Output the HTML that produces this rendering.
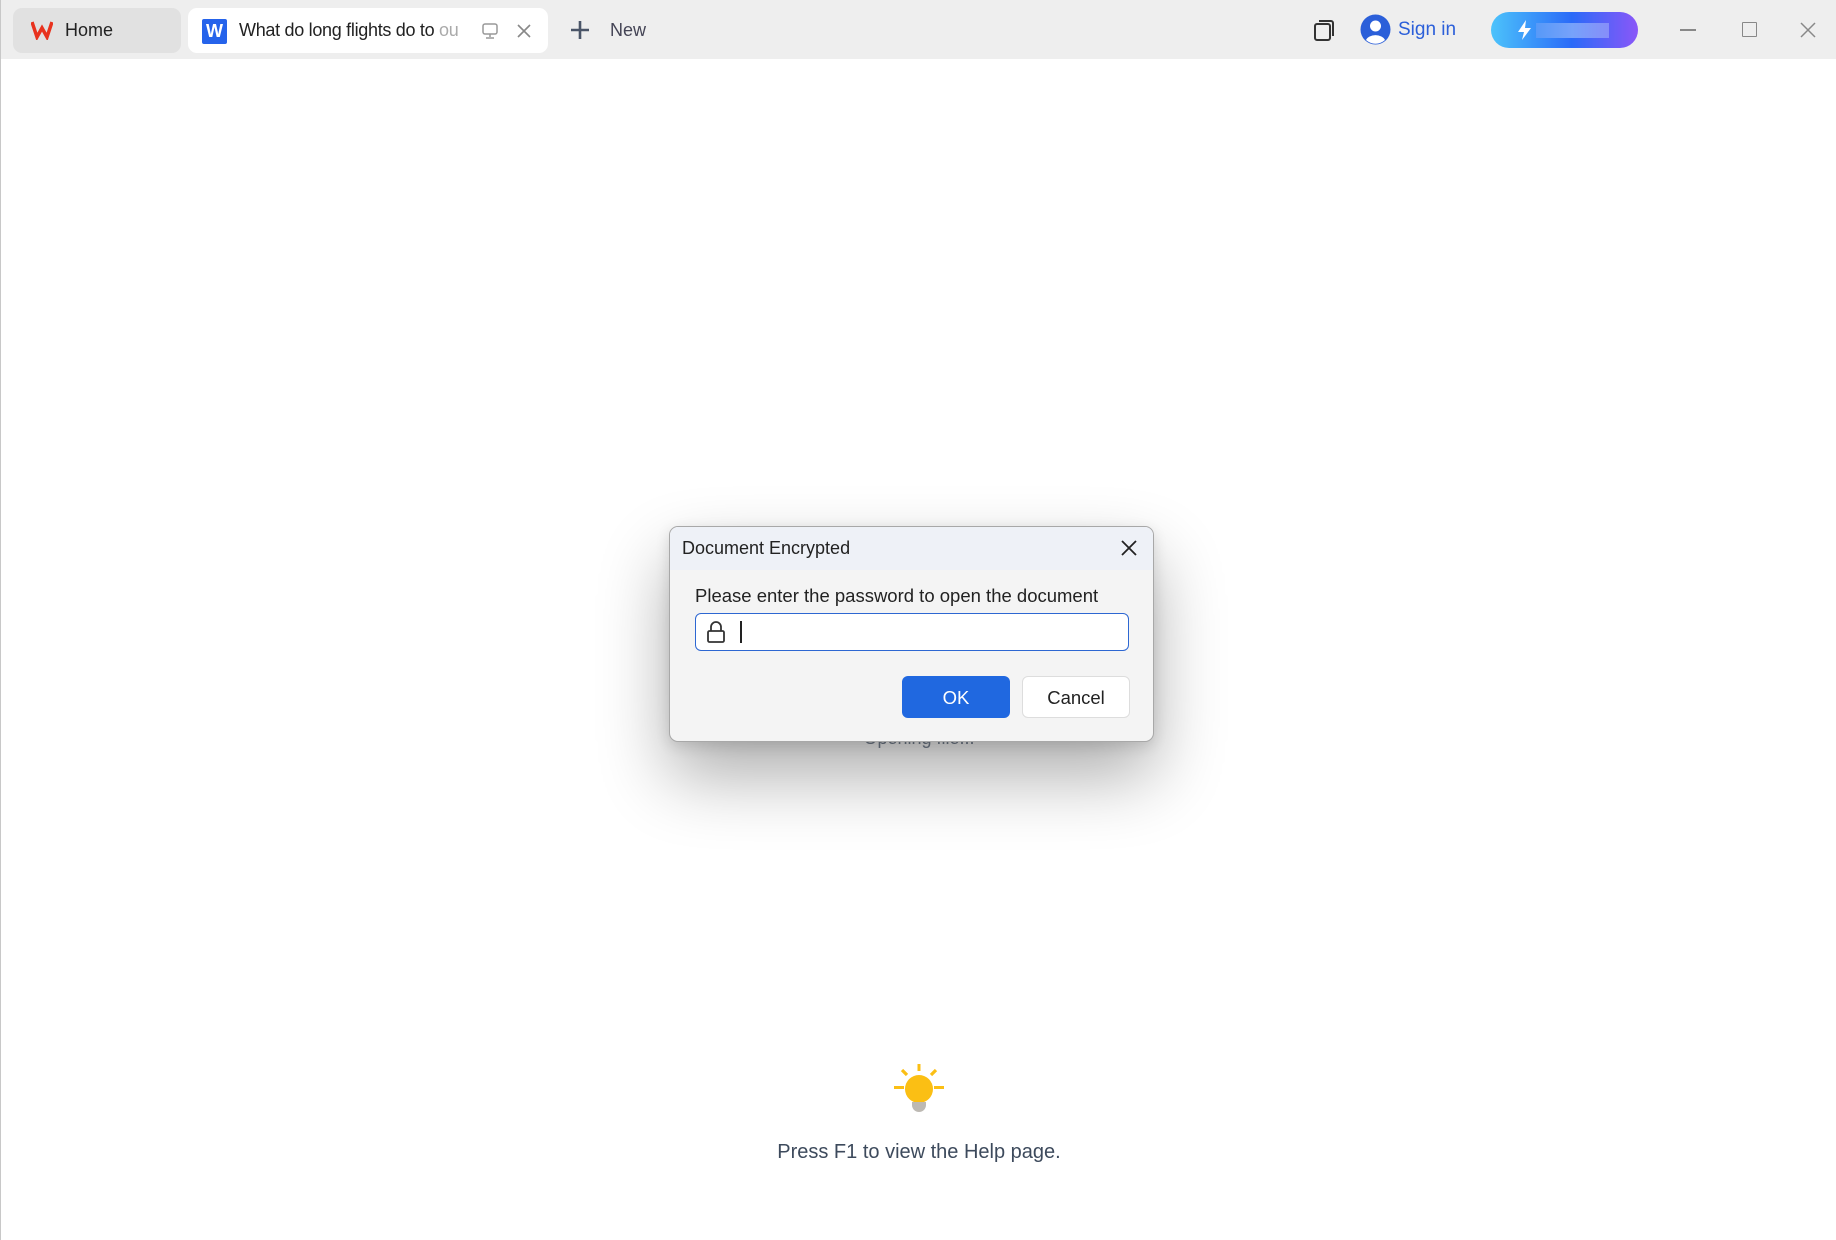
<!DOCTYPE html>
<html><head><meta charset="utf-8"><style>
*{margin:0;padding:0;box-sizing:border-box}
body{width:1836px;height:1240px;overflow:hidden;background:#fff;font-family:"Segoe UI","Liberation Sans",sans-serif;position:relative;border-left:1px solid #c8c8c8}
.bar{position:absolute;left:0;top:0;width:1836px;height:59px;background:#eeeeee}
.tab{position:absolute;top:8px;height:45px;border-radius:9px;font-size:18px;color:#222;display:flex;align-items:center}
.abs{position:absolute}
</style></head><body>
<div class="bar"></div>
<div class="tab" style="left:12px;width:168px;background:#e1e1e1">
 <svg class="abs" style="left:18px;top:12px" width="22" height="20" viewBox="0 0 22 20"><path d="M1 2 L6 17 L11 8 L16 17 L21 2" fill="none" stroke="#e8321e" stroke-width="3.5" stroke-linejoin="miter"/></svg>
 <span class="abs" style="left:52px;top:12px">Home</span>
</div>
<div class="tab" style="left:187px;width:360px;background:#fff">
 <div class="abs" style="left:14px;top:11px;width:25px;height:25px;background:#2563eb;border-radius:2px;color:#fff;font-weight:bold;font-size:18px;text-align:center;line-height:25px">W</div>
 <span class="abs" style="left:51px;top:12px;white-space:nowrap;width:236px;overflow:hidden;letter-spacing:-0.3px">What do long flights do to <span style="color:#aaa">ou</span></span>
 <svg class="abs" style="left:293px;top:14px" width="18" height="18" viewBox="0 0 18 18"><rect x="2" y="2" width="14" height="10" rx="2" fill="none" stroke="#999" stroke-width="1.5"/><path d="M9 12v3M5 16h8" stroke="#999" stroke-width="1.5"/></svg>
 <svg class="abs" style="left:328px;top:15px" width="16" height="16" viewBox="0 0 16 16"><path d="M2 2L14 14M14 2L2 14" stroke="#888" stroke-width="1.6"/></svg>
</div>
<svg class="abs" style="left:568px;top:19px" width="22" height="22" viewBox="0 0 22 22"><path d="M11 2v18M2 11h18" stroke="#4a5568" stroke-width="2.6"/></svg>
<span class="abs" style="left:609px;top:20px;font-size:18px;color:#445">New</span>
<svg class="abs" style="left:1312px;top:18px" width="22" height="24" viewBox="0 0 22 24"><rect x="2" y="6" width="15" height="16" rx="2" fill="none" stroke="#333" stroke-width="2"/><path d="M6 3h12a2 2 0 0 1 2 2v13" fill="none" stroke="#333" stroke-width="2"/></svg>
<svg class="abs" style="left:1359px;top:14px" width="31" height="31" viewBox="0 0 31 31"><circle cx="15.5" cy="15.5" r="15" fill="#2b5fd9"/><circle cx="15.5" cy="12" r="5.5" fill="#fff"/><path d="M6 26a10 7 0 0 1 19 0a14 14 0 0 1-19 0z" fill="#fff"/></svg>
<span class="abs" style="left:1397px;top:19px;font-size:19px;color:#2b5fd9">Sign in</span>
<div class="abs" style="left:1490px;top:12px;width:147px;height:36px;border-radius:18px;background:linear-gradient(90deg,#4cc3fb,#2a6af8 55%,#8a57f8)">
 <svg class="abs" style="left:25px;top:7px" width="18" height="22" viewBox="0 0 18 22"><path d="M10 1L2 13h6l-2 8 9-12h-6z" fill="#fff"/></svg>
 <div class="abs" style="left:45px;top:11px;width:73px;height:15px;background:linear-gradient(90deg,#5a9af8,#7fa8fa,#8b93f9);opacity:.9"></div>
</div>
<div class="abs" style="left:1679px;top:29px;width:16px;height:1.5px;background:#888"></div>
<div class="abs" style="left:1741px;top:22px;width:15px;height:15px;border:1.5px solid #888;border-radius:1px"></div>
<svg class="abs" style="left:1799px;top:22px" width="16" height="16" viewBox="0 0 16 16"><path d="M1 1L15 15M15 1L1 15" stroke="#888" stroke-width="1.5"/></svg>

<div class="abs" style="left:0;top:728px;width:1836px;text-align:center;font-size:18px;color:#7a8595;z-index:1">Opening file...</div>

<div class="abs" style="left:668px;top:526px;width:485px;height:216px;background:#f4f4f4;border:1.5px solid #a8a8a8;border-radius:9px;z-index:2;box-shadow:0 34px 70px rgba(0,0,0,.32),0 4px 14px rgba(0,0,0,.12);overflow:hidden">
 <div class="abs" style="left:0;top:0;width:485px;height:43px;background:#eef1f7"></div>
 <span class="abs" style="left:12px;top:11px;font-size:18px;color:#222">Document Encrypted</span>
 <svg class="abs" style="left:450px;top:12px" width="18" height="18" viewBox="0 0 18 18"><path d="M2 2L16 16M16 2L2 16" stroke="#222" stroke-width="1.8"/></svg>
 <span class="abs" style="left:25px;top:58px;font-size:18.5px;color:#222">Please enter the password to open the document</span>
 <div class="abs" style="left:25px;top:86px;width:434px;height:38px;background:#fff;border:1.5px solid #2d67d2;border-radius:6px">
  <svg class="abs" style="left:10px;top:7px" width="20" height="22" viewBox="0 0 20 22"><path d="M5 10V6a5 5 0 0 1 10 0v4" fill="none" stroke="#333" stroke-width="1.8"/><rect x="2" y="10" width="16" height="11" rx="1.5" fill="none" stroke="#333" stroke-width="1.8"/></svg>
  <div class="abs" style="left:44px;top:7px;width:1.5px;height:22px;background:#222"></div>
 </div>
 <div class="abs" style="left:232px;top:149px;width:108px;height:42px;background:#2068e0;border-radius:6px;color:#fff;font-size:18.5px;text-align:center;line-height:44px">OK</div>
 <div class="abs" style="left:352px;top:149px;width:108px;height:42px;background:#fff;border:1.5px solid #ddd;border-radius:6px;color:#222;font-size:18.5px;text-align:center;line-height:41px">Cancel</div>
</div>

<svg class="abs" style="left:890px;top:1062px" width="56" height="56" viewBox="0 0 56 56"><circle cx="28" cy="27" r="14" fill="#fbbf14"/><path d="M21 40h14v3a7 7 0 0 1-14 0z" fill="#bdb9b3"/><rect x="26.5" y="2" width="3" height="7" fill="#fbbf14"/><rect x="3" y="24" width="10" height="3" fill="#fbbf14"/><rect x="43" y="24" width="10" height="3" fill="#fbbf14"/><path d="M11 8l5 5M45 8l-5 5" stroke="#fbbf14" stroke-width="3.2"/></svg>
<div class="abs" style="left:0;top:1141px;width:1836px;text-align:center;font-size:20px;color:#3d4a5c">Press F1 to view the Help page.</div>
</body></html>
